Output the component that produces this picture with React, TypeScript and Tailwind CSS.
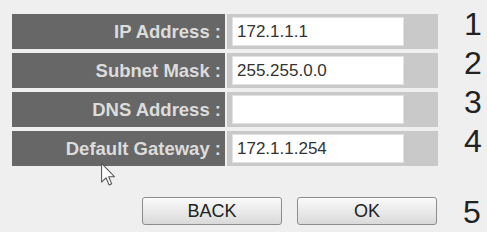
const ROWS = [
  { label: "IP Address :", value: "172.1.1.1", n: "1" },
  { label: "Subnet Mask :", value: "255.255.0.0", n: "2" },
  { label: "DNS Address :", value: "", n: "3" },
  { label: "Default Gateway :", value: "172.1.1.254", n: "4" },
];

function Cursor() {
  return (
    <svg
      viewBox="0 0 12 20"
      className="absolute left-[101px] top-[162px] w-[14px] h-[25px]"
      fill="#ffffff"
      stroke="#555555"
      strokeWidth="0.9"
      strokeLinejoin="round"
    >
      <path d="M0.5 0.5 L0.5 16.5 L4.3 12.8 L7 19 L9.2 18 L6.6 11.9 L11.5 11.9 Z" />
    </svg>
  );
}

export default function App() {
  return (
    <div
      className="relative w-[487px] h-[232px] bg-[#efefef] overflow-hidden pl-[12px] pt-[14px]"
      style={{ fontFamily: '"Liberation Sans", Arial, sans-serif' }}
    >
      <div className="flex flex-col gap-[4px]">
        {ROWS.map((row) => (
          <div key={row.n} className="flex">
            <div className="flex gap-[2px] h-[35px]">
              {/* label cell */}
              <div className="w-[213px] bg-[#676767] flex items-center justify-end pr-[4px] text-[18.5px] font-bold text-[#dcdcdc]">
                {row.label}
              </div>
              {/* input cell */}
              <div className="w-[211px] bg-[#c9c9c9] flex items-center pl-[5px]">
                <div className="w-[172px] h-[29px] bg-white border border-[#e2e2e2] flex items-center pl-[4px] text-[17px] text-[#333333]">
                  {row.value}
                </div>
              </div>
            </div>
            <div className="ml-[26px] -mt-[6px] text-[32px] leading-none text-[#222222]">
              {row.n}
            </div>
          </div>
        ))}
      </div>

      <div className="flex items-center mt-[28px]">
        <button className="ml-[130px] w-[140px] h-[28px] rounded-[3px] border border-[#8c8c8c] bg-gradient-to-b from-[#fafafa] to-[#dadada] text-[18px] text-[#222222] shadow-[inset_0_1px_0_#ffffff]">
          BACK
        </button>
        <button className="ml-[15px] w-[140px] h-[28px] rounded-[3px] border border-[#8c8c8c] bg-gradient-to-b from-[#fafafa] to-[#dadada] text-[18px] text-[#222222] shadow-[inset_0_1px_0_#ffffff]">
          OK
        </button>
        <div className="ml-[26px] mt-[2px] text-[32px] leading-none text-[#222222]">5</div>
      </div>

      <Cursor />
    </div>
  );
}
